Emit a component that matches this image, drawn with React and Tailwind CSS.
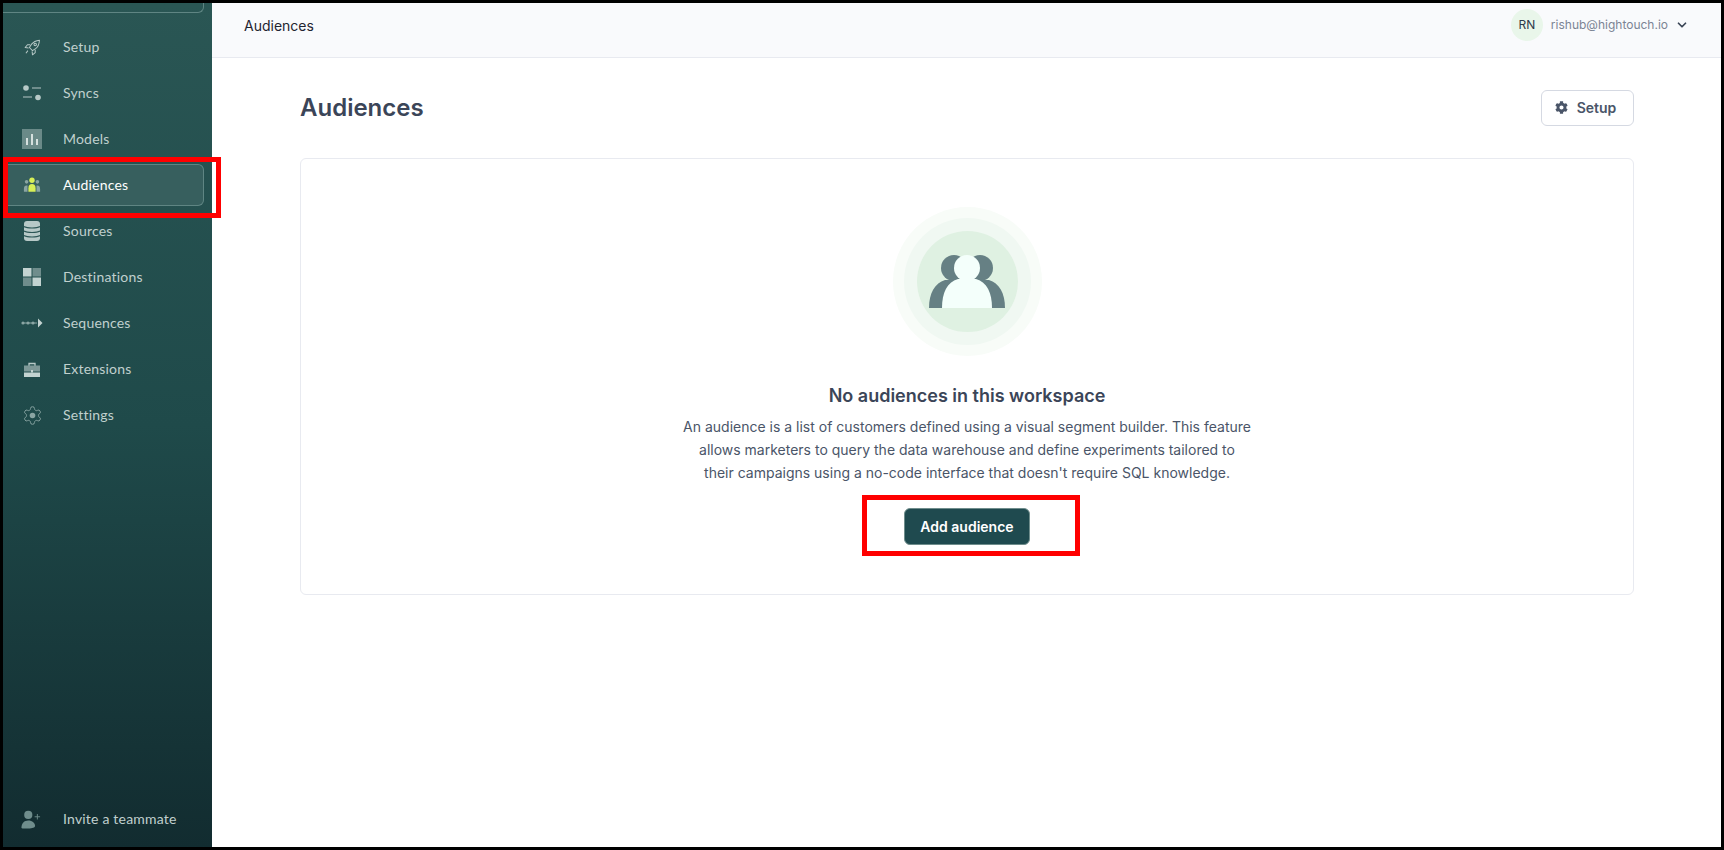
import React from 'react';
import { ChevronDown } from 'lucide-react';
import { FaCog } from 'react-icons/fa';

const SetupIcon = () => (
  <svg width="17" height="17" viewBox="0 0 22 22" fill="none" stroke="#b7c9c7" strokeWidth="1.300" strokeLinejoin="round">
    <path d="M20 1.500c-4.500.3-8 2.200-10.500 5.500L7 11l4 4 4-2.500C18.500 10 19.700 6 20 1.500z" />
    <circle cx="14.500" cy="7" r="1.600" />
    <path d="M8 7.500H4.500L1.500 11l4.500.5M14.500 14v3.500l-3.500 3-.5-4.500M5 15l-2.500 3.500" />
  </svg>
);

const SyncsIcon = () => (
  <svg width="18" height="16" viewBox="0 0 18 16" fill="#b7c9c7">
    <circle cx="3" cy="3" r="2.800" />
    <rect x="9" y="2" width="9" height="2" fill="#6f8d8c" />
    <rect y="11" width="9" height="2" fill="#6f8d8c" />
    <circle cx="15" cy="12.500" r="2.800" />
  </svg>
);

const ModelsIcon = () => (
  <svg width="20" height="20" viewBox="0 0 20 20">
    <rect width="20" height="20" fill="#6a8a88" />
    <rect x="4" y="9" width="2" height="7" fill="#d5e0de" />
    <rect x="9" y="5" width="2" height="11" fill="#d5e0de" />
    <rect x="14" y="10" width="2" height="6" fill="#d5e0de" />
  </svg>
);

const AudiencesIcon = () => (
  <svg width="18" height="16" viewBox="0 0 20 17">
    <circle cx="4" cy="5" r="2" fill="#8aa5a3" />
    <circle cx="16" cy="5" r="2" fill="#8aa5a3" />
    <path d="M1 16v-3c0-3 1-4 3-4h1v7zM19 16v-3c0-3-1-4-3-4h-1v7z" fill="#8aa5a3" />
    <circle cx="10" cy="3.200" r="3" fill="#d7ef57" />
    <path d="M6 16v-4c0-3 1.500-4.500 4-4.500s4 1.500 4 4.500v4z" fill="#d7ef57" />
  </svg>
);

const SourcesIcon = () => (
  <svg width="16" height="20" viewBox="0 0 16 20">
    <rect width="16" height="20" rx="3" fill="#b7c9c7" />
    <path d="M0 5.500c3 2 13 2 16 0M0 10c3 2 13 2 16 0M0 14.500c3 2 13 2 16 0" fill="none" stroke="#2c5655" strokeWidth="1.200" />
  </svg>
);

const DestinationsIcon = () => (
  <svg width="18" height="18" viewBox="0 0 18 18">
    <rect width="8.500" height="8.500" fill="#c3d3d1" />
    <rect x="9.500" width="8.500" height="8.500" fill="#6f8d8c" />
    <rect y="9.500" width="8.500" height="8.500" fill="#6f8d8c" />
    <rect x="9.500" y="9.500" width="8.500" height="8.500" fill="#c3d3d1" />
  </svg>
);

const SequencesIcon = () => (
  <svg width="22" height="10" viewBox="0 0 22 10">
    <path d="M1 5h15" stroke="#8aa5a3" strokeWidth="1" />
    <circle cx="2" cy="5" r="1.600" fill="#8aa5a3" />
    <circle cx="7" cy="5" r="1.600" fill="#8aa5a3" />
    <circle cx="12" cy="5" r="1.600" fill="#8aa5a3" />
    <path d="M17 0.500l4.500 4.500-4.500 4.500z" fill="#c3d3d1" />
  </svg>
);

const ExtensionsIcon = () => (
  <svg width="16" height="15" viewBox="0 0 16 15">
    <path d="M5 4V1.500h6V4" fill="none" stroke="#b7c9c7" strokeWidth="1.300" />
    <rect y="3.500" width="16" height="6" fill="#7d9897" />
    <rect y="10.500" width="16" height="4.500" fill="#c3d3d1" />
    <rect x="7" y="8" width="2" height="2.500" fill="#c3d3d1" />
  </svg>
);

const GearIcon = () => (
  <svg width="21" height="21" viewBox="0 0 24 24" fill="none">
    <path
      d="M12.220 2h-.44a2 2 0 0 0-2 2v.18a2 2 0 0 1-1 1.730l-.43.25a2 2 0 0 1-2 0l-.15-.08a2 2 0 0 0-2.730.73l-.22.38a2 2 0 0 0 .73 2.730l.15.1a2 2 0 0 1 1 1.720v.51a2 2 0 0 1-1 1.740l-.15.09a2 2 0 0 0-.73 2.730l.22.38a2 2 0 0 0 2.730.73l.15-.08a2 2 0 0 1 2 0l.43.25a2 2 0 0 1 1 1.730V20a2 2 0 0 0 2 2h.44a2 2 0 0 0 2-2v-.18a2 2 0 0 1 1-1.730l.43-.25a2 2 0 0 1 2 0l.15.08a2 2 0 0 0 2.730-.73l.22-.39a2 2 0 0 0-.73-2.730l-.15-.08a2 2 0 0 1-1-1.740v-.5a2 2 0 0 1 1-1.740l.15-.09a2 2 0 0 0 .73-2.730l-.22-.38a2 2 0 0 0-2.730-.73l-.15.08a2 2 0 0 1-2 0l-.43-.25a2 2 0 0 1-1-1.730V4a2 2 0 0 0-2-2z"
      stroke="#8aa5a3"
      strokeWidth="1.100"
    />
    <circle cx="12" cy="12" r="3.200" fill="#8aa5a3" />
  </svg>
);

const InviteIcon = () => (
  <svg width="20" height="19" viewBox="0 0 22 20" fill="#6f8d8c">
    <circle cx="8" cy="5" r="4.500" />
    <path d="M0.500 19c0-5 3-8 7.500-8s7.500 3 7.500 6c0 2-3 3-7.500 3s-7.500 0-7.500-1z" />
    <path d="M15 7h6M18 4v6" stroke="#6f8d8c" strokeWidth="1" />
  </svg>
);

const navItems = [
  { label: 'Setup', icon: SetupIcon },
  { label: 'Syncs', icon: SyncsIcon },
  { label: 'Models', icon: ModelsIcon },
  { label: 'Audiences', icon: AudiencesIcon, active: true },
  { label: 'Sources', icon: SourcesIcon },
  { label: 'Destinations', icon: DestinationsIcon },
  { label: 'Sequences', icon: SequencesIcon },
  { label: 'Extensions', icon: ExtensionsIcon },
  { label: 'Settings', icon: GearIcon },
];

function NavItem({ item }) {
  const Icon = item.icon;
  return (
    <div
      className={
        item.active
          ? 'relative flex h-[42px] items-center rounded-r-md border border-l-0 border-[#5f8583] bg-[#375f5e] pl-px text-white'
          : 'flex h-[42px] items-center border border-transparent text-[#c0d0ce]'
      }
    >
      <div className="mr-[3px] flex w-[56px] shrink-0 justify-center">
        <Icon />
      </div>
      <span className="mb-[2px] text-[14px] tracking-[0.2px]">{item.label}</span>
      {item.active && (
        <div className="absolute -top-[8px] -right-[18px] -bottom-[13px] left-0 border-[5px] border-[#ff0000]" />
      )}
    </div>
  );
}

function EmptyIllustration() {
  return (
    <div className="flex h-[149px] w-[149px] items-center justify-center rounded-full bg-[#f8fcf8]">
      <div className="flex h-[127px] w-[127px] items-center justify-center rounded-full bg-[#f0f8f2]">
        <div className="flex h-[101px] w-[101px] items-center justify-center rounded-full bg-[#dff1e2]">
          <svg width="76" height="53" viewBox="0 0 76 53">
            <circle cx="25" cy="13" r="13" fill="#668084" />
            <circle cx="51" cy="13" r="13" fill="#668084" />
            <path d="M0 53C0 38 6 28 16 25L60 25C70 28 76 38 76 53z" fill="#668084" />
            <circle cx="38" cy="13" r="13" fill="#f4fffb" />
            <path d="M13 53C13 38 18 27 29 24L47 24C58 27 63 38 63 53z" fill="#f4fffb" />
          </svg>
        </div>
      </div>
    </div>
  );
}

export default function App() {
  return (
    <div className="flex h-[850px] overflow-hidden border-[3px] border-black bg-white font-['Inter',sans-serif]">
      {/* Sidebar */}
      <aside className="flex w-[209px] shrink-0 flex-col bg-gradient-to-b from-[#2a5654] via-[#1f4a4a] to-[#122c30] font-['Lato',sans-serif]">
        <div className="h-[10px] w-[201px] rounded-br-md border-r border-b border-[#5f8583]" />
        <nav className="mt-[13px] flex w-[201px] flex-col gap-[4px]">
          {navItems.map((item) => (
            <NavItem key={item.label} item={item} />
          ))}
        </nav>
        <div className="mt-auto mb-[7px] flex h-[42px] items-center text-[#c0d0ce]">
          <div className="mr-[4px] flex w-[56px] shrink-0 justify-center">
            <InviteIcon />
          </div>
          <span className="mb-[2px] text-[14px] tracking-[0.2px]">Invite a teammate</span>
        </div>
      </aside>

      {/* Main */}
      <main className="flex min-w-0 flex-1 flex-col">
        <header className="flex h-[55px] shrink-0 items-center justify-between border-b border-[#e8eaf0] bg-[#f9fafc] pr-[32px] pb-[10px] pl-[32px]">
          <span className="text-[14px] text-[#1f2430]">Audiences</span>
          <div className="flex items-center">
            <div className="flex h-8 w-8 items-center justify-center rounded-full bg-[#e9f6ea] text-[12px] text-[#2f3a4a]">RN</div>
            <span className="ml-2 text-[12px] text-[#7b8494]">rishub@hightouch.io</span>
            <ChevronDown size={14} strokeWidth={3} className="ml-[7px] text-[#3a4556]" />
          </div>
        </header>

        <div className="flex flex-1 flex-col pt-[31px] pr-[87px] pl-[88px]">
          <div className="flex h-[37px] items-center justify-between">
            <h1 className="text-[24px] font-semibold text-[#3b4558]">Audiences</h1>
            <button className="flex h-[36px] w-[93px] items-center justify-center gap-[9px] rounded-md border border-[#d5d9e2] bg-white pr-[4px] text-[14px] font-semibold text-[#4a5568]">
              <FaCog size={13} />
              Setup
            </button>
          </div>

          <div className="mt-[32px] flex h-[437px] flex-col items-center rounded-md border border-[#e8eaf0] pt-[48px]">
            <EmptyIllustration />
            <h2 className="mt-[26px] text-[18px] leading-[28px] font-semibold text-[#3b4558]">No audiences in this workspace</h2>
            <p className="mt-[5px] w-[600px] text-center text-[14px] leading-[23px] text-[#4a5568]">
              An audience is a list of customers defined using a visual segment builder. This feature
              <br />
              allows marketers to query the data warehouse and define experiments tailored to
              <br />
              their campaigns using a no-code interface that doesn't require SQL knowledge.
            </p>
            <div className="relative mt-[24px]">
              <button className="flex h-[37px] w-[126px] items-center justify-center rounded-md border border-[#6f8d8c] bg-[#1f4a4f] text-[14px] font-semibold text-white">
                Add audience
              </button>
              <div className="absolute -top-[13px] -right-[50px] -bottom-[11px] -left-[42px] border-[5px] border-[#ff0000]" />
            </div>
          </div>
        </div>
      </main>
    </div>
  );
}
